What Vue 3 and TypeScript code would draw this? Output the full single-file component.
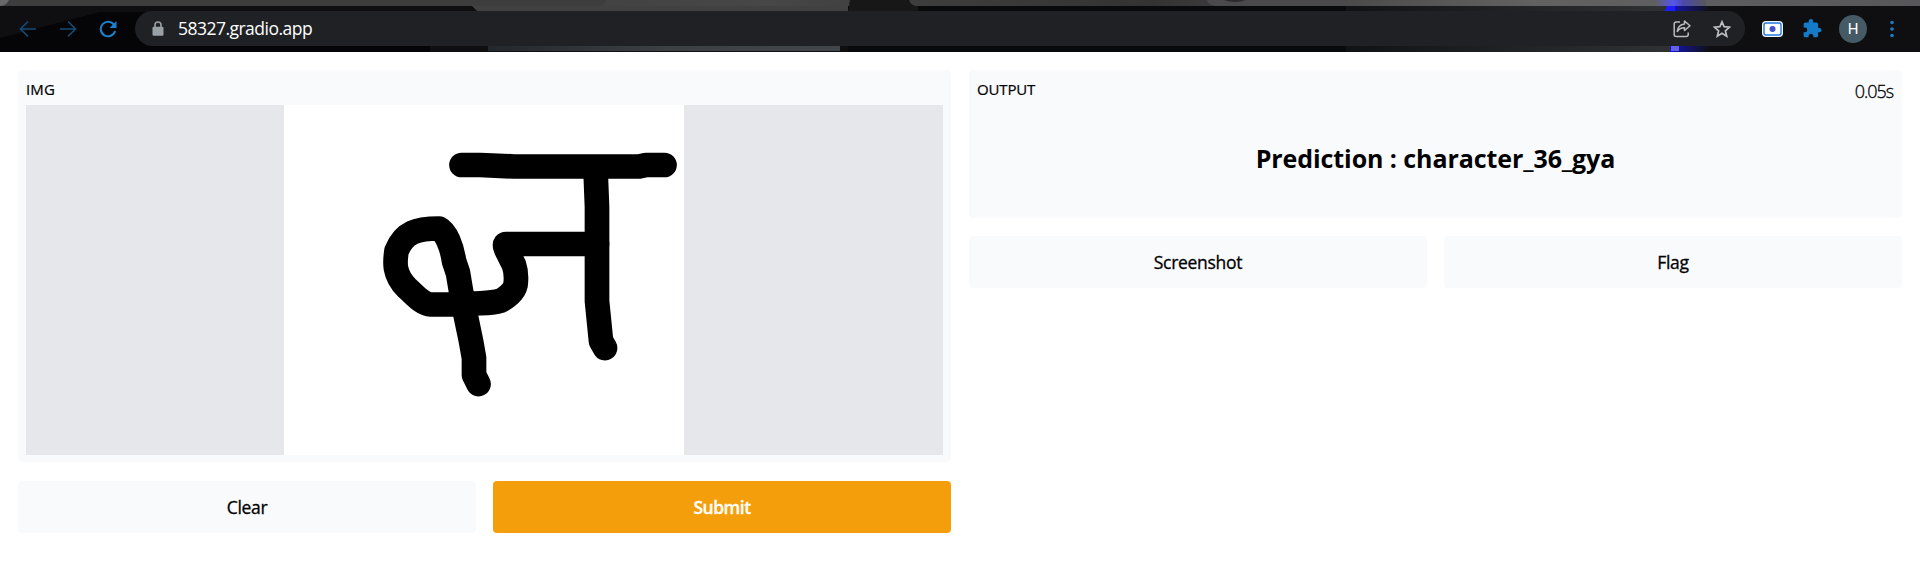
<script setup lang="ts">
import { ref } from 'vue'

const address = ref('58327.gradio.app')
const prediction = ref('Prediction : character_36_gya')
const duration = ref('0.05s')
</script>

<template>
  <div class="window">
    <header class="browser">
      <svg class="backdrop" width="1920" height="52" aria-hidden="true">
        <defs>
          <linearGradient id="frame" x1="0" x2="1" y1="0" y2="0">
            <stop offset="0" stop-color="#333" /><stop offset=".4" stop-color="#474747" />
            <stop offset=".45" stop-color="#404040" /><stop offset=".6" stop-color="#333" />
            <stop offset=".8" stop-color="#626262" /><stop offset="1" stop-color="#57575b" />
          </linearGradient>
          <linearGradient id="glow" x1="0" x2="1" y1="0" y2="0">
            <stop offset="0" stop-color="#1010e8" /><stop offset=".25" stop-color="#14148c" />
            <stop offset="1" stop-color="#101012" />
          </linearGradient>
          <linearGradient id="tabglow" x1="0" x2="1" y1="0" y2="0">
            <stop offset="0" stop-color="#5f5f66" /><stop offset=".35" stop-color="#5555ee" />
            <stop offset=".55" stop-color="#4a4aa8" /><stop offset="1" stop-color="#57575b" />
          </linearGradient>
          <linearGradient id="strip" x1="0" x2="1" y1="0" y2="0">
            <stop offset="0" stop-color="#24282d" /><stop offset=".5" stop-color="#3c4043" /><stop offset="1" stop-color="#42464a" />
          </linearGradient>
          <linearGradient id="ridge" x1="0" x2="1" y1="0" y2="0">
            <stop offset="0" stop-color="#101214" /><stop offset="1" stop-color="#303133" />
          </linearGradient>
        </defs>
        <rect width="1920" height="52" fill="#0f0f12" />
        <path d="M0 38 L100 12 H430 V52 H0Z" fill="#050507" />
        <path d="M472 6H850L848 12H478Z" fill="#414141" />
        <rect x="848" y="6" width="510" height="46" fill="#090a0c" />
        <rect x="1346" y="6" width="324" height="46" fill="url(#ridge)" />
        <rect width="1920" height="6" fill="url(#frame)" />
        <path d="M0 0H606Q604 6 598 6H0Z" fill="#3d3d3d" />
        <path d="M0 0H9Q6 6 0 6Z" fill="#68686a" />
        <path d="M850 0H909Q911 6 918 6V12H848Z" fill="#171717" />
        <path d="M1207 0H1344L1341 6H1217Q1209 6 1207 0Z" fill="#4a4a4d" />
        <path d="M1224 0H1246Q1235 4 1224 0Z" fill="#2b2b2d" />
        <rect x="488" y="46" width="352" height="5" fill="url(#strip)" />
        <rect x="1670" y="6" width="40" height="46" fill="url(#glow)" />
        <rect x="1656" y="0" width="50" height="6" fill="url(#tabglow)" />
        <path d="M1667 6H1675V12H1664Z" fill="#1c1cff" />
        <rect x="1671" y="46" width="8" height="5" fill="#655ee9" />
      </svg>
      <nav class="nav-icons">
        <svg viewBox="0 0 18 18" fill="none" stroke="#174a74" stroke-width="1.7"><path d="M17 9H2M9 1.5 1.5 9 9 16.5" /></svg>
        <svg viewBox="0 0 18 18" fill="none" stroke="#174a74" stroke-width="1.7"><path d="M1 9H16M9 1.5 16.5 9 9 16.5" /></svg>
        <svg viewBox="0 0 18 18" fill="none" stroke="#1c80cb" stroke-width="2"><path d="M15.3 5.2A7.3 7.3 0 1 0 16.1 11" /><path d="M17.5 1V8H10.5Z" fill="#1c80cb" stroke="none" /></svg>
      </nav>
      <div class="address-bar">
        <svg class="lock" viewBox="0 0 12 16"><path d="M3 7V4a3 3 0 0 1 6 0v3" fill="none" stroke="#9aa0a6" stroke-width="1.6" /><rect x=".5" y="5.8" width="11" height="9" rx="1.2" fill="#9aa0a6" /></svg>
        <span class="url">{{ address }}</span>
        <svg class="share" viewBox="0 0 18 18" fill="none" stroke="#b9bbbe" stroke-width="1.5" stroke-linejoin="round"><path d="M7 2H3.2Q1.2 2 1.2 4v10.5q0 2 2 2h10q2 0 2-2v-2" /><path d="M11.5 1 17 5.7 11.5 10.5V7.7Q7 7.5 4.2 11.5 5 4.7 11.5 3.9Z" /></svg>
        <svg class="star" viewBox="0 0 18 18" fill="none" stroke="#bcbec1" stroke-width="1.7"><path d="M9 1.8 11.1 6.7 16.6 7.2 12.4 10.8 13.7 16.2 9 13.3 4.3 16.2 5.6 10.8 1.4 7.2 6.9 6.7Z" /></svg>
      </div>
      <div class="extensions">
        <svg class="camera" viewBox="0 0 21 16"><rect width="21" height="16" rx="4" fill="#f1f8ff" /><rect x="2" y="2" width="17" height="12" rx="2" fill="#fff" stroke="#2478dc" stroke-width="1.4" /><circle cx="10.5" cy="8" r="3" fill="#4051cb" /></svg>
        <svg class="puzzle" viewBox="0 0 18 18" fill="#147bc8"><path d="M15.5 8.5H14.3V5q0-1.6-1.6-1.6H9.6V2.2a2.1 2.1 0 0 0-4.2 0v1.2H2.2Q.6 3.4.6 5v3.1H1.8a2.25 2.25 0 0 1 0 4.5H.6v3.2q0 1.6 1.6 1.6H5.3v-1.2a2.25 2.25 0 0 1 4.5 0v1.2h2.9q1.6 0 1.6-1.6v-3.2h1.2a2.05 2.05 0 0 0 0-4.1Z" /></svg>
        <span class="avatar">H</span>
        <svg class="dots" viewBox="0 0 4 18" fill="#187dc4"><circle cx="2" cy="2.5" r="1.8" /><circle cx="2" cy="9" r="1.8" /><circle cx="2" cy="15.5" r="1.8" /></svg>
      </div>
    </header>

    <main class="workspace">
      <section class="column">
        <div class="panel">
          <h2 class="label img-label">IMG</h2>
          <div class="preview">
            <svg class="drawing" viewBox="0 0 400 350">
              <g fill="none" stroke="#000" stroke-width="24.7" stroke-linecap="round" stroke-linejoin="round">
                <path d="M177.500 60H196L230 61.500H355L362 60H380.500" />
                <path d="M311.500 64 313 102V196L317 236 321 243" />
                <path d="M313 139H222Q220 139 222 144L230 160Q233 169 231.500 180C230 187 222 193 217 195.500C207 199 193 197.500 181 199.500H147C138 199 131 190 123 183C109 169 111 156 112.500 146C120 127 133 123.500 155 123.500C162 127 168 142 170 156L174 168 178 192 182 212 187 236 190 253V270L194.500 279" />
              </g>
            </svg>
          </div>
        </div>
        <div class="actions">
          <button>Clear</button>
          <button class="primary">Submit</button>
        </div>
      </section>
      <section class="column">
        <div class="panel output">
          <div class="output-head"><h2 class="label output-label">OUTPUT</h2><span class="duration">{{ duration }}</span></div>
          <h1>{{ prediction }}</h1>
        </div>
        <div class="actions">
          <button>Screenshot</button>
          <button>Flag</button>
        </div>
      </section>
    </main>
  </div>
</template>

<style>
body { margin: 0; background: #fff; }
</style>
<style scoped>
* { box-sizing: border-box; }
.window { width: 1920px; height: 576px; overflow: hidden; background: #fff; color: #000; font-family: "Open Sans", "Noto Sans", sans-serif; }
.browser { position: relative; height: 52px; padding: 11px 25px 6px 19px; display: flex; align-items: center; }
.backdrop { position: absolute; inset: 0; }
.nav-icons { position: relative; display: flex; gap: 22px; width: 116px; flex: none; }
.nav-icons svg { width: 18px; height: 18px; flex: none; }
.address-bar { position: relative; width: 1610px; height: 35px; border-radius: 18px; background: #202124; display: flex; align-items: center; padding: 0 14px 0 17px; }
.lock { width: 12px; height: 16px; }
.url { color: #fff; font-size: 17.5px; margin-left: 14px; flex: 1; letter-spacing: -.52px; line-height: 32px; padding-bottom: 2px; }
.share { width: 18px; height: 18px; margin-right: 22px; }
.star { width: 18px; height: 18px; }
.extensions { position: relative; display: flex; align-items: center; margin-left: 17px; }
.camera { width: 21px; height: 16px; }
.puzzle { width: 19px; height: 19px; margin-left: 20px; }
.avatar { width: 28px; height: 28px; margin-left: 17px; border-radius: 50%; background: #455a64; color: #fff; font: 15px/28px Roboto, sans-serif; text-align: center; }
.dots { width: 4px; height: 18px; margin-left: 23px; }
.workspace { display: grid; grid-template-columns: 933px 933px; gap: 18px; padding: 18px 17px 0 18px; }
.panel { height: 392px; padding: 8px; background: #f9fafb; border-radius: 4px; }
.label { margin: 0; font-size: 15px; font-weight: 400; line-height: 23px; height: 27px; -webkit-text-stroke: .2px #000; }
.img-label { letter-spacing: .1px; }
.output-label { letter-spacing: -.15px; }
.preview { height: 350px; background: #e5e7eb; display: flex; padding-left: 258px; }
.drawing { width: 400px; height: 350px; background: #fff; }
.actions { display: grid; grid-template-columns: 1fr 1fr; gap: 17px; margin-top: 19px; }
button { height: 52px; padding: 0; border: 0; border-radius: 4px; background: #f9fafb; color: #000; font: 500 17.5px/52px "Open Sans", "Noto Sans", sans-serif; letter-spacing: -.3px; -webkit-text-stroke: .3px currentColor; }
button.primary { background: #f59e0b; color: #fff; font-weight: 600; letter-spacing: -.5px; }
.output { height: 148px; }
.output + .actions { margin-top: 18px; }
.output-head { display: flex; justify-content: space-between; }
.duration { font-size: 18px; line-height: 27px; height: 27px; font-weight: 300; letter-spacing: -1.05px; padding-right: 1px; -webkit-text-stroke: .3px #000; }
h1 { margin: 34px 0 0; text-align: center; font-size: 25px; line-height: 38px; letter-spacing: -.08px; font-weight: 700; }
</style>
